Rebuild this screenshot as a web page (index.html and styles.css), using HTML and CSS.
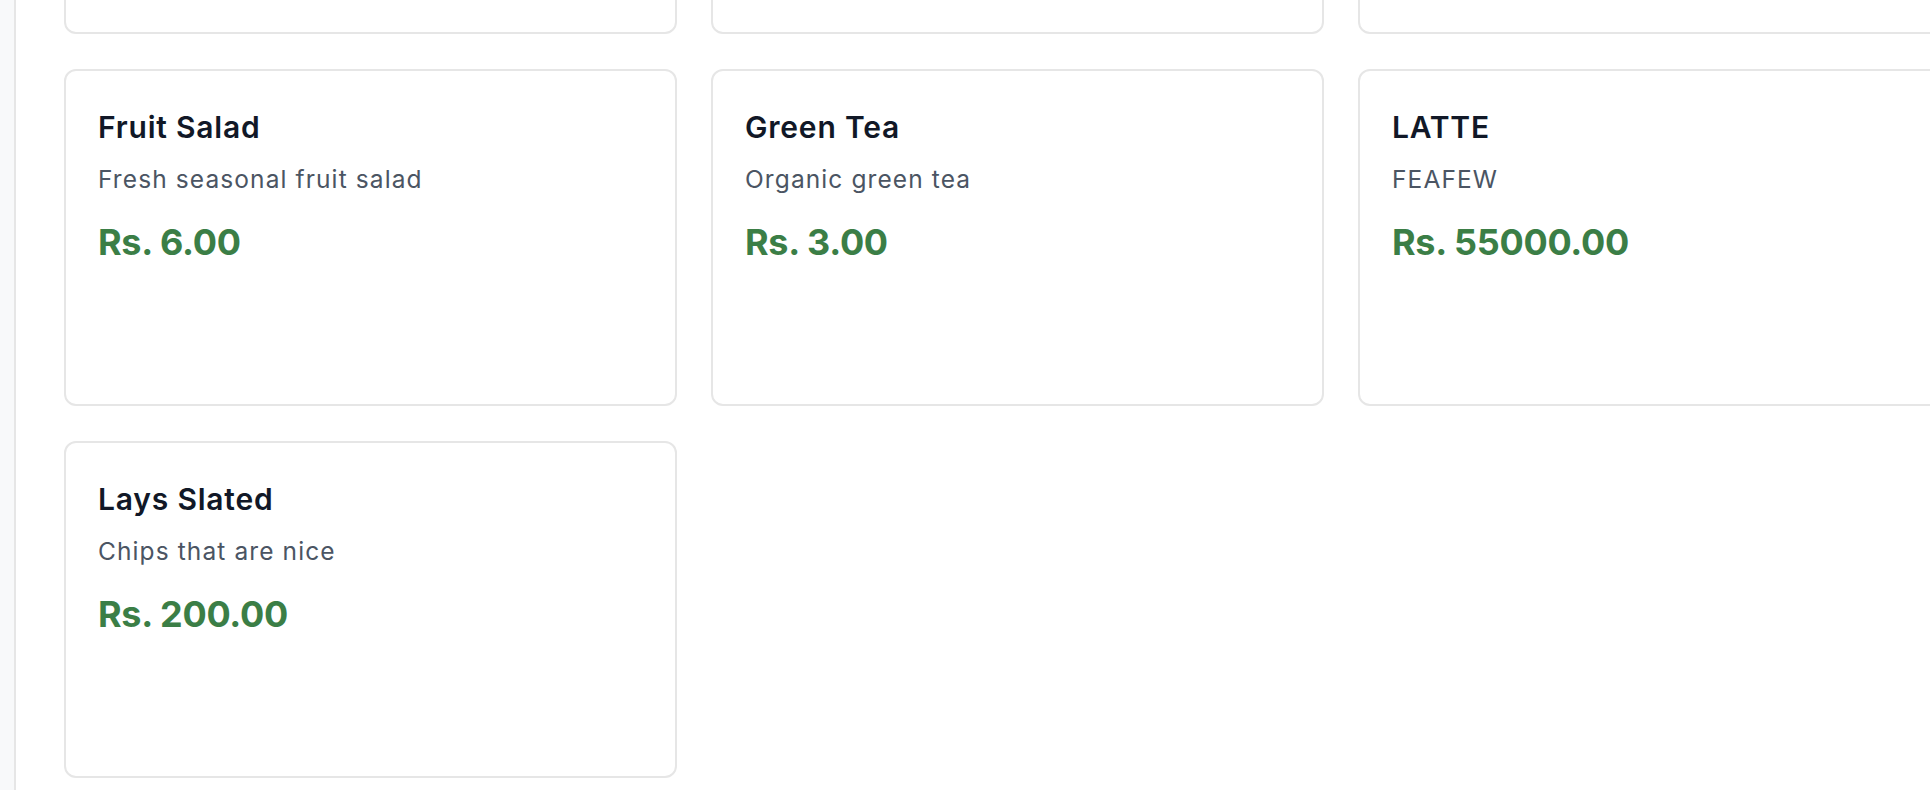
FILE: index.html
```html
<!DOCTYPE html>
<html lang="en">
<head>
<meta charset="utf-8">
<title>Menu items</title>
<link rel="stylesheet" href="styles.css">
</head>
<body>
<div class="layout">
  <aside class="sidebar"></aside>
  <main class="content">
    <div class="grid">
      <div class="card"></div>
      <div class="card"></div>
      <div class="card"></div>
      <div class="card">
        <h3 class="card-title">Fruit Salad</h3>
        <p class="card-desc">Fresh seasonal fruit salad</p>
        <p class="card-price">Rs. 6.00</p>
      </div>
      <div class="card">
        <h3 class="card-title">Green Tea</h3>
        <p class="card-desc">Organic green tea</p>
        <p class="card-price">Rs. 3.00</p>
      </div>
      <div class="card">
        <h3 class="card-title">LATTE</h3>
        <p class="card-desc">FEAFEW</p>
        <p class="card-price">Rs. 55000.00</p>
      </div>
      <div class="card">
        <h3 class="card-title">Lays Slated</h3>
        <p class="card-desc">Chips that are nice</p>
        <p class="card-price">Rs. 200.00</p>
      </div>
    </div>
  </main>
</div>
</body>
</html>
```
FILE: styles.css
```css
html, body {
  margin: 0;
  padding: 0;
  height: 100%;
  overflow: hidden;
  background: #ffffff;
  font-family: Inter, "Noto Sans", "Liberation Sans", sans-serif;
}

.layout {
  display: flex;
  height: 100%;
}

.sidebar {
  flex: 0 0 14px;
  background: #f8f9fa;
  border-right: 2px solid #e6e6e6;
}

.content {
  flex: 1 1 auto;
  padding: 0 48px;
  min-width: 0;
}

.grid {
  display: grid;
  grid-template-columns: repeat(3, 613px);
  grid-auto-rows: 337px;
  column-gap: 34px;
  row-gap: 35px;
  margin-top: -303px;
}

.card {
  box-sizing: border-box;
  border: 2px solid #e6e6e6;
  border-radius: 12px;
  background: #ffffff;
  padding: 34px 32px;
}

.card-title {
  margin: 0;
  font-size: 30px;
  line-height: 45px;
  font-weight: 600;
  letter-spacing: 0.8px;
  color: #111827;
}

.card-desc {
  margin: 11px 0 0;
  font-size: 24.5px;
  line-height: 36px;
  font-weight: 400;
  letter-spacing: 1.1px;
  color: #4b5563;
}

.card-price {
  margin: 18px 0 0;
  font-size: 36px;
  line-height: 54px;
  font-weight: 700;
  letter-spacing: -0.3px;
  color: #3b7e46;
}
```
